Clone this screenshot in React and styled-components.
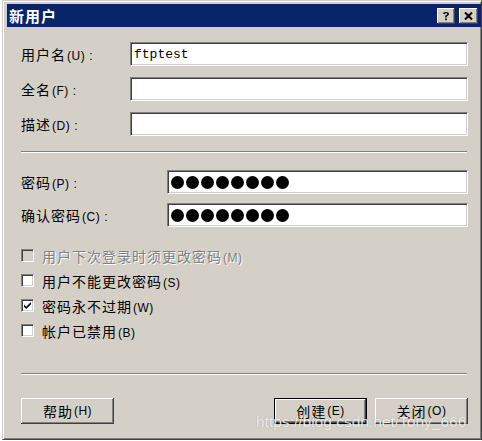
import styled, { createGlobalStyle } from "styled-components";

const GlobalStyle = createGlobalStyle`
  html, body {
    margin: 0;
    padding: 0;
    background: #ffffff;
  }
  body {
    font-family: "Noto Sans CJK SC", "Liberation Sans", sans-serif;
  }
`;

const Window = styled.div`
  position: relative;
  box-sizing: border-box;
  width: 480px;
  height: 440px;
  margin-left: 2px;
  padding: 2px 0 0 4px;
  background: #d4d0c8;
  border-top: 1px solid #d4d0c8;
  border-left: 1px solid #d4d0c8;
  border-right: 1px solid #404040;
  border-bottom: 1px solid #404040;
  box-shadow: inset 1px 1px #ffffff, inset -1px -1px #808080;
`;

const TitleBar = styled.div`
  display: flex;
  align-items: center;
  height: 23px;
  padding: 0 3px 0 2px;
  margin-top: 1px;
  background: #0a246a;
`;

const TitleText = styled.div`
  flex: 1;
  color: #ffffff;
  font-size: 15px;
  font-weight: bold;
  letter-spacing: 1px;
  line-height: 23px;
`;

const TitleButton = styled.div`
  box-sizing: border-box;
  display: flex;
  align-items: center;
  justify-content: center;
  width: ${(p) => p.$w}px;
  height: 16px;
  margin-left: ${(p) => p.$gap}px;
  background: #d4d0c8;
  box-shadow: inset -1px -1px #404040, inset 1px 1px #ffffff,
    inset -2px -2px #808080;
`;

const Content = styled.div`
  padding: 15px 13px 0 14px;
`;

const FieldGroup = styled.div`
  display: flex;
  flex-direction: column;
  gap: ${(p) => p.$gap}px;
  margin-top: ${(p) => p.$top || 0}px;
`;

const Row = styled.div`
  display: flex;
  align-items: center;
  height: 24px;
`;

const Label = styled.div`
  width: ${(p) => p.$w}px;
  flex-shrink: 0;
  font-size: 14px;
  letter-spacing: 1px;
  color: #000000;
  white-space: nowrap;
`;

const Key = styled.span`
  font-family: "Liberation Sans", sans-serif;
  font-size: 12px;
  letter-spacing: 0.5px;
  margin-left: 1px;
  color: inherit;
`;

const Colon = styled.span`
  font-family: "Liberation Sans", sans-serif;
  font-size: 12px;
  margin-left: 4px;
`;

const Field = styled.div`
  box-sizing: border-box;
  flex: 1;
  height: 24px;
  display: flex;
  align-items: center;
  gap: 2px;
  padding-left: 3px;
  background: #ffffff;
  border-top: 1px solid #808080;
  border-left: 1px solid #808080;
  border-right: 1px solid #ffffff;
  border-bottom: 1px solid #ffffff;
  box-shadow: inset 1px 1px #404040, inset -1px -1px #d4d0c8;
  font-family: "Liberation Mono", monospace;
  font-size: 13px;
  color: #000000;
`;

const Dot = styled.span`
  width: 13px;
  height: 13px;
  border-radius: 50%;
  background: #000000;
`;

const Separator = styled.div`
  height: 0;
  border-top: 1px solid #808080;
  border-bottom: 1px solid #ffffff;
  margin: ${(p) => p.$top}px 1px 0 0;
`;

const CheckList = styled.div`
  display: flex;
  flex-direction: column;
  margin-top: 16px;
`;

const CheckRow = styled.div`
  display: flex;
  align-items: center;
  gap: 8px;
  height: 25px;
`;

const Box = styled.span`
  box-sizing: border-box;
  width: 13px;
  height: 13px;
  display: flex;
  align-items: center;
  justify-content: center;
  background: ${(p) => (p.$disabled ? "#d4d0c8" : "#ffffff")};
  border-top: 1px solid #808080;
  border-left: 1px solid #808080;
  border-right: 1px solid #ffffff;
  border-bottom: 1px solid #ffffff;
  box-shadow: inset 1px 1px #404040, inset -1px -1px #d4d0c8;
`;

const CheckText = styled.span`
  font-size: 14px;
  letter-spacing: 1px;
  color: ${(p) => (p.$disabled ? "#808080" : "#000000")};
  text-shadow: ${(p) => (p.$disabled ? "1px 1px #ffffff" : "none")};
  white-space: nowrap;
`;

const ButtonBar = styled.div`
  display: flex;
  justify-content: space-between;
  margin-top: 23px;
`;

const ButtonGroup = styled.div`
  display: flex;
  gap: 8px;
`;

const Button = styled.div`
  box-sizing: border-box;
  width: 93px;
  height: 26px;
  display: flex;
  align-items: center;
  justify-content: center;
  background: #d4d0c8;
  font-size: 14px;
  letter-spacing: 1px;
  color: #000000;
  border: ${(p) => (p.$default ? "1px solid #000000" : "none")};
  box-shadow: inset -1px -1px #404040, inset 1px 1px #ffffff,
    inset -2px -2px #808080;
`;

const Watermark = styled.div`
  position: absolute;
  left: 253px;
  top: 412px;
  font-family: "Liberation Sans", sans-serif;
  font-size: 15.5px;
  color: rgba(255, 255, 255, 0.85);
  text-shadow: 0 0 1px rgba(60, 60, 60, 0.45);
  white-space: nowrap;
  pointer-events: none;
`;

const FieldLabel = ({ text, k, w }) => (
  <Label $w={w}>
    {text}
    <Key>({k})</Key>
    <Colon>:</Colon>
  </Label>
);

const Check = ({ text, k, checked, disabled }) => (
  <CheckRow>
    <Box $disabled={disabled}>
      {checked && (
        <svg width="9" height="9" viewBox="0 0 9 9">
          <path d="M1 3.5 L3.2 5.8 L8 1 L8 3.2 L3.2 8 L1 5.8 Z" fill="#000" />
        </svg>
      )}
    </Box>
    <CheckText $disabled={disabled}>
      {text}
      <Key>({k})</Key>
    </CheckText>
  </CheckRow>
);

const Dots = () => (
  <Field>
    {Array.from({ length: 8 }).map((_, i) => (
      <Dot key={i} />
    ))}
  </Field>
);

export default function App() {
  return (
    <>
      <GlobalStyle />
      <Window>
        <TitleBar>
          <TitleText>新用户</TitleText>
          <TitleButton $w={18} $gap={0}>
            <svg width="8" height="10" viewBox="0 0 8 10">
              <path
                d="M1 3 Q1 1 4 1 Q7 1 7 3 Q7 4.5 4.8 5.3 L4.8 6.5 L3.2 6.5 L3.2 4.6 Q5.3 4 5.3 3 Q5.3 2.3 4 2.3 Q2.7 2.3 2.7 3.3 Z M3.2 7.6 L4.8 7.6 L4.8 9.2 L3.2 9.2 Z"
                fill="#000"
              />
            </svg>
          </TitleButton>
          <TitleButton $w={19} $gap={4}>
            <svg width="9" height="8" viewBox="0 0 9 8">
              <path d="M1 0.5 L4.5 4 M8 0.5 L4.5 4 M1 7.5 L4.5 4 M8 7.5 L4.5 4" stroke="#000" strokeWidth="2" />
            </svg>
          </TitleButton>
        </TitleBar>

        <Content>
          <FieldGroup $gap={11}>
            <Row>
              <FieldLabel text="用户名" k="U" w={109} />
              <Field>ftptest</Field>
            </Row>
            <Row>
              <FieldLabel text="全名" k="F" w={109} />
              <Field />
            </Row>
            <Row>
              <FieldLabel text="描述" k="D" w={109} />
              <Field />
            </Row>
          </FieldGroup>

          <Separator $top={15} />

          <FieldGroup $gap={9} $top={17}>
            <Row>
              <FieldLabel text="密码" k="P" w={146} />
              <Dots />
            </Row>
            <Row>
              <FieldLabel text="确认密码" k="C" w={146} />
              <Dots />
            </Row>
          </FieldGroup>

          <CheckList>
            <Check text="用户下次登录时须更改密码" k="M" disabled />
            <Check text="用户不能更改密码" k="S" />
            <Check text="密码永不过期" k="W" checked />
            <Check text="帐户已禁用" k="B" />
          </CheckList>

          <Separator $top={30} />

          <ButtonBar>
            <Button>
              帮助<Key>(H)</Key>
            </Button>
            <ButtonGroup>
              <Button $default>
                创建<Key>(E)</Key>
              </Button>
              <Button>
                关闭<Key>(O)</Key>
              </Button>
            </ButtonGroup>
          </ButtonBar>
        </Content>
        <Watermark>https://blog.csdn.net/Tony_666</Watermark>
      </Window>
    </>
  );
}
